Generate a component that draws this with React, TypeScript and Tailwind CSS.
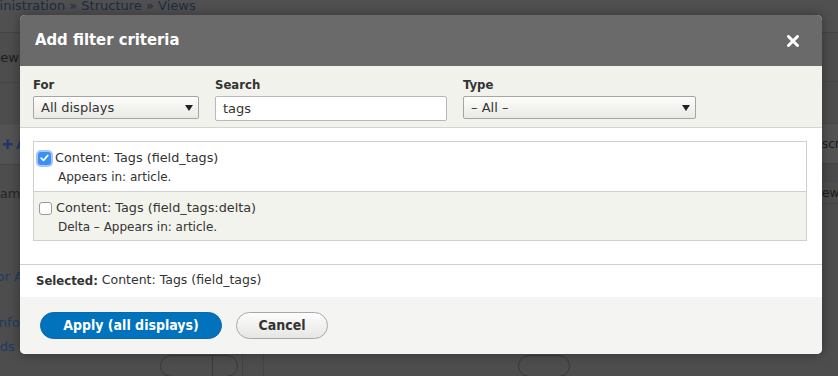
import React from "react";

function Caret() {
  return (
    <svg width="8" height="6" viewBox="0 0 8 6" className="shrink-0">
      <path d="M0 0 L8 0 L4 6 Z" fill="#222" />
    </svg>
  );
}

function SelectBox({ value, width }: { value: string; width: string }) {
  return (
    <div
      className={`flex h-[23px] items-center justify-between rounded-[2px] border border-[#a5a5a5] bg-gradient-to-b from-[#fdfdfb] to-[#e9e9e5] pl-[7px] pr-[5px] text-[13px] text-[#333] ${width}`}
    >
      <span>{value}</span>
      <Caret />
    </div>
  );
}

function Label({ children }: { children: React.ReactNode }) {
  return (
    <div className="mb-[3px] font-['DejaVu_Sans_Condensed','DejaVu_Sans',sans-serif] text-[13px] leading-[16px] font-bold text-[#333]">
      {children}
    </div>
  );
}

function Row({
  title,
  desc,
  checked,
  tinted,
}: {
  title: string;
  desc: string;
  checked?: boolean;
  tinted?: boolean;
}) {
  return (
    <div
      className={`h-[49px] px-[4px] pt-[8px] ${tinted ? "border-t border-[#cfcfcf] bg-[#f3f3ee]" : "bg-white"}`}
    >
      <div className="flex h-[16px] items-center gap-[4px] text-[12.8px] text-[#333]">
        {checked ? (
          <span className="flex h-[13px] w-[13px] items-center justify-center rounded-[3px] bg-[#3a8ef6] shadow-[0_0_0_2px_rgba(90,150,240,0.55)]">
            <svg width="9" height="8" viewBox="0 0 9 8">
              <path d="M1.2 4.2 L3.5 6.4 L7.8 1.4" stroke="#fff" strokeWidth="1.7" fill="none" strokeLinecap="round" strokeLinejoin="round" />
            </svg>
          </span>
        ) : (
          <span className="ml-[1px] h-[13px] w-[13px] rounded-[3px] border border-[#9a9a9a] bg-white" />
        )}
        <span>{title}</span>
      </div>
      <div className="mt-[3px] pl-[20px] text-[12px] leading-[16px] text-[#333]">{desc}</div>
    </div>
  );
}

export default function App() {
  return (
    <div className="relative h-[376px] w-[838px] overflow-hidden bg-[#4d4d4d] font-['DejaVu_Sans',sans-serif] whitespace-nowrap">
      {/* page behind the overlay */}
      <div className="flex h-[33px] items-start border-b border-[#454545] bg-[#505050]">
        <div className="-ml-[30px] -mt-[2px] text-[13px] leading-[16px] text-[#1e2c44]">
          Administration » Structure » Views
        </div>
      </div>
      <div className="flex">
        <div className="w-[20px] overflow-hidden text-[13px] leading-[16px]">
          <div className="flex h-[50px] items-center border-b border-[#454545] text-[#1c1c1c]">
            <span className="-ml-[12px]">View</span>
          </div>
          <div className="h-[43px] border-b border-[#555]" />
          <div className="flex h-[39px] items-center border-b border-[#464646] bg-[#535353] font-bold text-[#1d3a66]">
            <span className="ml-[2px]">✚</span>
            <span className="ml-[3px]">Add</span>
          </div>
          <div className="mt-[21px] text-[#262626]">
            <span className="-ml-[10px] inline-block">Name</span>
          </div>
          <div className="mt-[67px] text-[#1d3a66]">
            <span className="-ml-[8px] inline-block">for Area</span>
          </div>
          <div className="mt-[30px] text-[#1d3a66]">
            <span className="-ml-[5px] inline-block">Info</span>
          </div>
          <div className="mt-[8px] text-[#1d3a66]">
            <span className="-ml-[22px] inline-block">Fields (</span>
          </div>
        </div>
        <div className="relative flex-1">
          <div className="absolute left-[140px] top-[322px] flex h-[22px] w-[78px] rounded-full border border-[#393939]">
            <div className="flex-1 border-r border-[#393939]" />
            <div className="w-[24px]" />
          </div>
          <div className="absolute left-[498px] top-[322px] h-[22px] w-[52px] rounded-full border border-[#393939]" />
          <div className="absolute left-[222px] top-[320px] h-[30px] w-px bg-[#444]" />
          <div className="absolute left-[243px] top-[320px] h-[30px] w-px bg-[#444]" />
        </div>
        <div className="w-[16px] overflow-hidden text-[12px] leading-[16px]">
          <div className="h-[49px] border-b border-[#474747]" />
          <div className="h-[42px] border-b border-[#474747]" />
          <div className="flex h-[40px] items-center border-b border-[#444] bg-[#535353] text-[#1c1c1c]">
            <span>scription</span>
          </div>
          <div className="h-[18px] border-b border-[#474747] bg-[#4a4a4a]" />
          <div className="flex h-[22px] items-center border-b border-[#444] text-[#1c1c1c]">
            <span>ew link</span>
          </div>
        </div>
      </div>

      {/* dialog */}
      <div className="absolute left-[20px] top-[15px] flex h-[339px] w-[802px] flex-col overflow-hidden rounded-[5px] bg-white shadow-[0_0_12px_rgba(0,0,0,0.35)]">
        <div className="flex h-[51px] shrink-0 items-center justify-between bg-[#6a6a6a] pl-[15px] pr-[23px]">
          <h1 className="font-['DejaVu_Sans_Condensed','DejaVu_Sans',sans-serif] text-[16.5px] font-bold text-white">
            Add filter criteria
          </h1>
          <svg width="12" height="12" viewBox="0 0 12 12">
            <path d="M1.5 1.5 L10.5 10.5 M10.5 1.5 L1.5 10.5" stroke="#fff" strokeWidth="3" strokeLinecap="round" />
          </svg>
        </div>

        <div className="flex h-[62px] shrink-0 gap-[16px] border-b border-[#d4d4d0] bg-[#f2f2ec] px-[13px] pt-[11px]">
          <div>
            <Label>For</Label>
            <SelectBox value="All displays" width="w-[166px]" />
          </div>
          <div>
            <Label>Search</Label>
            <div className="flex h-[25px] w-[232px] items-center rounded-[2px] border border-[#b9b9b9] bg-white pl-[7px] text-[13px] text-[#333]">
              tags
            </div>
          </div>
          <div>
            <Label>Type</Label>
            <SelectBox value="– All –" width="w-[233px]" />
          </div>
        </div>

        <div className="h-[136px] shrink-0 bg-white px-[13px] pt-[13px]">
          <div className="w-[774px] border border-[#cfcfcf]">
            <Row title="Content: Tags (field_tags)" desc="Appears in: article." checked />
            <Row title="Content: Tags (field_tags:delta)" desc="Delta – Appears in: article." tinted />
          </div>
        </div>

        <div className="flex h-[33px] shrink-0 items-center border-t border-[#cfcfcf] bg-white pb-[1px] pl-[16px] text-[12.5px] text-[#333]">
          <span className="font-['DejaVu_Sans_Condensed','DejaVu_Sans',sans-serif] text-[13px] font-bold">Selected:</span>
          <span className="ml-[4px]">Content: Tags (field_tags)</span>
        </div>

        <div className="flex flex-1 items-start gap-[14px] bg-[#f4f4f2] pl-[20px] pt-[15px]">
          <button className="h-[27px] w-[182px] rounded-full border border-[#0a68a8] bg-[#0073bc] font-['DejaVu_Sans_Condensed','DejaVu_Sans',sans-serif] text-[14px] font-bold text-white">
            Apply (all displays)
          </button>
          <button className="h-[27px] w-[92px] rounded-full border border-[#a8a8a8] bg-gradient-to-b from-[#fdfdfd] to-[#e6e6e3] font-['DejaVu_Sans_Condensed','DejaVu_Sans',sans-serif] text-[14px] font-bold text-[#333]">
            Cancel
          </button>
        </div>
      </div>
    </div>
  );
}
